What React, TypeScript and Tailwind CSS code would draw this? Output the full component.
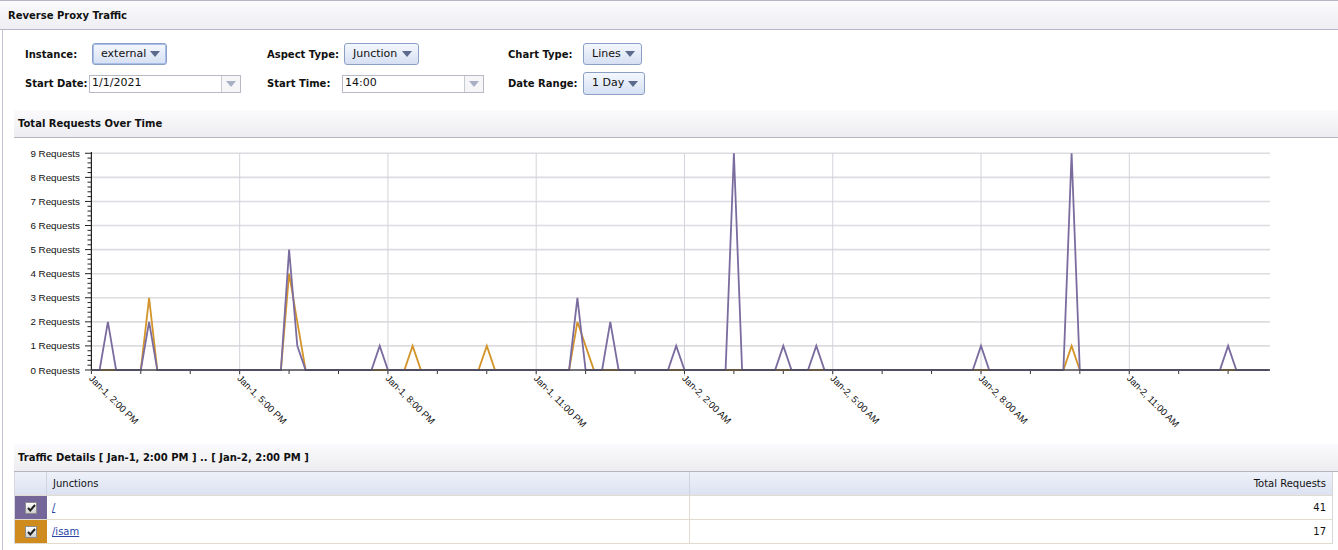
import React from "react";

const UI = { fontFamily: '"DejaVu Sans", Verdana, sans-serif' };

// chart geometry (page coords)
const X0 = 91.4;
const DX = 8.237;
const Y0 = 370;
const DY = 24.08;
const N = 144;

const purpleData: Record<number, number> = {
  2: 2, 7: 2, 24: 5, 25: 1, 35: 1, 59: 3, 63: 2, 71: 1, 78: 9, 84: 1, 88: 1, 108: 1, 119: 9, 138: 1,
};
const orangeData: Record<number, number> = { 7: 3, 24: 4, 25: 2, 39: 1, 48: 1, 59: 2, 60: 1, 119: 1 };

const toPoints = (data: Record<number, number>) =>
  Array.from({ length: N }, (_, i) => `${(X0 + i * DX).toFixed(1)},${(Y0 - (data[i] || 0) * DY).toFixed(1)}`).join(" ");

const xLabels = [
  "Jan-1, 2:00 PM",
  "Jan-1, 5:00 PM",
  "Jan-1, 8:00 PM",
  "Jan-1, 11:00 PM",
  "Jan-2, 2:00 AM",
  "Jan-2, 5:00 AM",
  "Jan-2, 8:00 AM",
  "Jan-2, 11:00 AM",
];

const Arrow = ({ color = "#5b6a8c" }: { color?: string }) => (
  <svg width="10" height="6" viewBox="0 0 10 6">
    <polygon points="0,0 10,0 5,6" fill={color} />
  </svg>
);

const Dropdown = ({ text, width, focused = false, tall = false }: { text: string; width: string; focused?: boolean; tall?: boolean }) => (
  <div
    className={`${width} ${tall ? "h-[23px]" : "h-[22px]"} shrink-0 flex items-center justify-between pl-[8px] pr-[6px] rounded-[3px] border border-[#8ca0c6] bg-gradient-to-b from-[#f4f7fd] to-[#d6e0f3] text-[11px] text-[#111] ${
      focused ? "shadow-[inset_0_0_0_1px_#a7bdea]" : ""
    }`}
  >
    <span>{text}</span>
    <Arrow />
  </div>
);

const ComboInput = ({ value, width }: { value: string; width: string }) => (
  <div className={`${width} h-[18px] shrink-0 flex border border-[#b7b9c4] bg-white text-[11px] text-[#111]`}>
    <div className="flex-1 flex items-center pl-[2px]">{value}</div>
    <div className="w-[19px] flex items-center justify-center border-l border-[#c8cad2] bg-[#f6f6f9]">
      <Arrow color="#a9b0c6" />
    </div>
  </div>
);

const Label = ({ text, width }: { text: string; width: string }) => (
  <div className={`${width} shrink-0 whitespace-nowrap text-[10px] font-bold text-[#111]`}>{text}</div>
);

const SectionBar = ({ title }: { title: string }) => (
  <div className="ml-[11px] h-[28px] flex items-center pl-[4px] bg-gradient-to-b from-[#fbfbfd] to-[#ededf1] border-b border-[#b3b4bd] text-[10px] font-bold text-[#111]">
    {title}
  </div>
);

const CheckBox = () => (
  <div className="w-[12px] h-[12px] border border-[#8d8d8d] bg-gradient-to-b from-[#ffffff] to-[#cfcfcf] flex items-center justify-center">
    <svg width="9" height="8" viewBox="0 0 9 8">
      <path d="M1 4 L3.3 6.5 L8 1" stroke="#222" strokeWidth="2" fill="none" />
    </svg>
  </div>
);

const Chart = () => {
  const minor = Array.from({ length: 46 }, (_, i) => Y0 - i * (DY / 5));
  return (
    <svg width="1324" height="309" viewBox="14 138 1324 309" className="block">
      {/* horizontal grid */}
      {Array.from({ length: 9 }, (_, k) => (
        <line key={`h${k}`} x1={X0} x2={1270} y1={Y0 - (k + 1) * DY} y2={Y0 - (k + 1) * DY} stroke="#dcdce1" strokeWidth="1.6" />
      ))}
      {/* vertical grid + labels */}
      {xLabels.map((t, k) => {
        const x = X0 + k * 148.27;
        return (
          <g key={t}>
            {k > 0 && <line x1={x} x2={x} y1={153} y2={376} stroke="#d3d3db" strokeWidth="1" />}
            <text
              x={x - 3}
              y={379}
              transform={`rotate(45 ${x - 3} 379)`}
              fontSize="9.6"
              fontFamily='"Liberation Sans", Arial, sans-serif'
              fill="#111"
            >
              {t}
            </text>
          </g>
        );
      })}
      {/* hour ticks */}
      {Array.from({ length: 24 }, (_, h) => (
        <line key={`t${h}`} x1={X0 + h * 6 * DX} x2={X0 + h * 6 * DX} y1={Y0} y2={374} stroke="#333" strokeWidth="1" />
      ))}
      {/* y labels */}
      {Array.from({ length: 10 }, (_, v) => (
        <text
          key={`y${v}`}
          x={80}
          y={Y0 - v * DY + 3.5}
          textAnchor="end"
          fontSize="9.8"
          fontFamily='"Liberation Sans", Arial, sans-serif'
          fill="#111"
        >
          {v} Requests
        </text>
      ))}
      {minor.map((y, i) => (
        <line key={`m${i}`} x1={i % 5 === 0 ? 85 : 87.5} x2={X0} y1={y} y2={y} stroke="#222" strokeWidth="1" />
      ))}
      {/* series */}
      <polyline points={toPoints(orangeData)} fill="none" stroke="#d3952b" strokeWidth="1.8" strokeLinejoin="miter" />
      <polyline points={toPoints(purpleData)} fill="none" stroke="#7a6c9f" strokeWidth="1.8" strokeLinejoin="miter" />
      {/* axes */}
      <line x1={X0} x2={X0} y1={152} y2={Y0} stroke="#222" strokeWidth="1.2" />
      <line x1={X0} x2={1270} y1={Y0} y2={Y0} stroke="#45454d" strokeWidth="1.6" />
    </svg>
  );
};

const rows = [
  { name: "/", total: 41, color: "bg-[#75669a]" },
  { name: "/isam", total: 17, color: "bg-[#d08b1f]" },
];

export default function App() {
  return (
    <div className="w-[1338px] h-[550px] bg-white overflow-hidden" style={UI}>
      <div className="h-[30px] flex items-center pl-[8px] border-y border-[#b6b7c6] bg-gradient-to-b from-[#fbfbfd] to-[#eeeef3] text-[10px] font-bold text-[#111]">
        Reverse Proxy Traffic
      </div>

      <div className="ml-[2px] h-[520px] border-l border-[#c3c6d4]">
        {/* form */}
        <div className="h-[80px] pl-[22px] pt-[13px] flex flex-col gap-[7px]">
          <div className="h-[22px] flex items-center">
            <div className="w-[242px] flex items-center">
              <Label text="Instance:" width="w-[67px]" />
              <Dropdown text="external" width="w-[75px]" focused />
            </div>
            <div className="w-[241px] flex items-center">
              <Label text="Aspect Type:" width="w-[77px]" />
              <Dropdown text="Junction" width="w-[75px]" />
            </div>
            <div className="flex items-center">
              <Label text="Chart Type:" width="w-[75px]" />
              <Dropdown text="Lines" width="w-[59px]" />
            </div>
          </div>
          <div className="h-[23px] flex items-center">
            <div className="w-[242px] flex items-center">
              <Label text="Start Date:" width="w-[64px]" />
              <ComboInput value="1/1/2021" width="w-[152px]" />
            </div>
            <div className="w-[241px] flex items-center">
              <Label text="Start Time:" width="w-[75px]" />
              <ComboInput value="14:00" width="w-[142px]" />
            </div>
            <div className="flex items-center">
              <Label text="Date Range:" width="w-[75px]" />
              <Dropdown text="1 Day" width="w-[62px]" tall />
            </div>
          </div>
        </div>

        <SectionBar title="Total Requests Over Time" />
        <div className="ml-[11px] h-[306px]">
          <Chart />
        </div>

        <SectionBar title="Traffic Details [ Jan-1, 2:00 PM ] .. [ Jan-2, 2:00 PM ]" />
        <div className="ml-[11px] w-[1319px] border-x border-[#d6d6dc] text-[10px] text-[#111]">
          <div className="h-[24px] flex bg-gradient-to-b from-[#eef1f9] to-[#dce2f1] border-b border-[#e2dccf]">
            <div className="w-[32px] border-r border-[#cfd3df]" />
            <div className="w-[643px] flex items-center pl-[6px] border-r border-[#cfd3df]">Junctions</div>
            <div className="flex-1 flex items-center justify-end pr-[6px]">Total Requests</div>
          </div>
          {rows.map((r) => (
            <div key={r.name} className="h-[24px] flex border-b border-[#e2dccf]">
              <div className={`w-[32px] flex items-center justify-center ${r.color}`}>
                <CheckBox />
              </div>
              <div className="w-[643px] flex items-center pl-[5px] border-r border-[#e2dccf]">
                <a className="text-[#2a45a6] underline" href="#">
                  {r.name}
                </a>
              </div>
              <div className="flex-1 flex items-center justify-end pr-[6px]">{r.total}</div>
            </div>
          ))}
        </div>
      </div>
    </div>
  );
}
